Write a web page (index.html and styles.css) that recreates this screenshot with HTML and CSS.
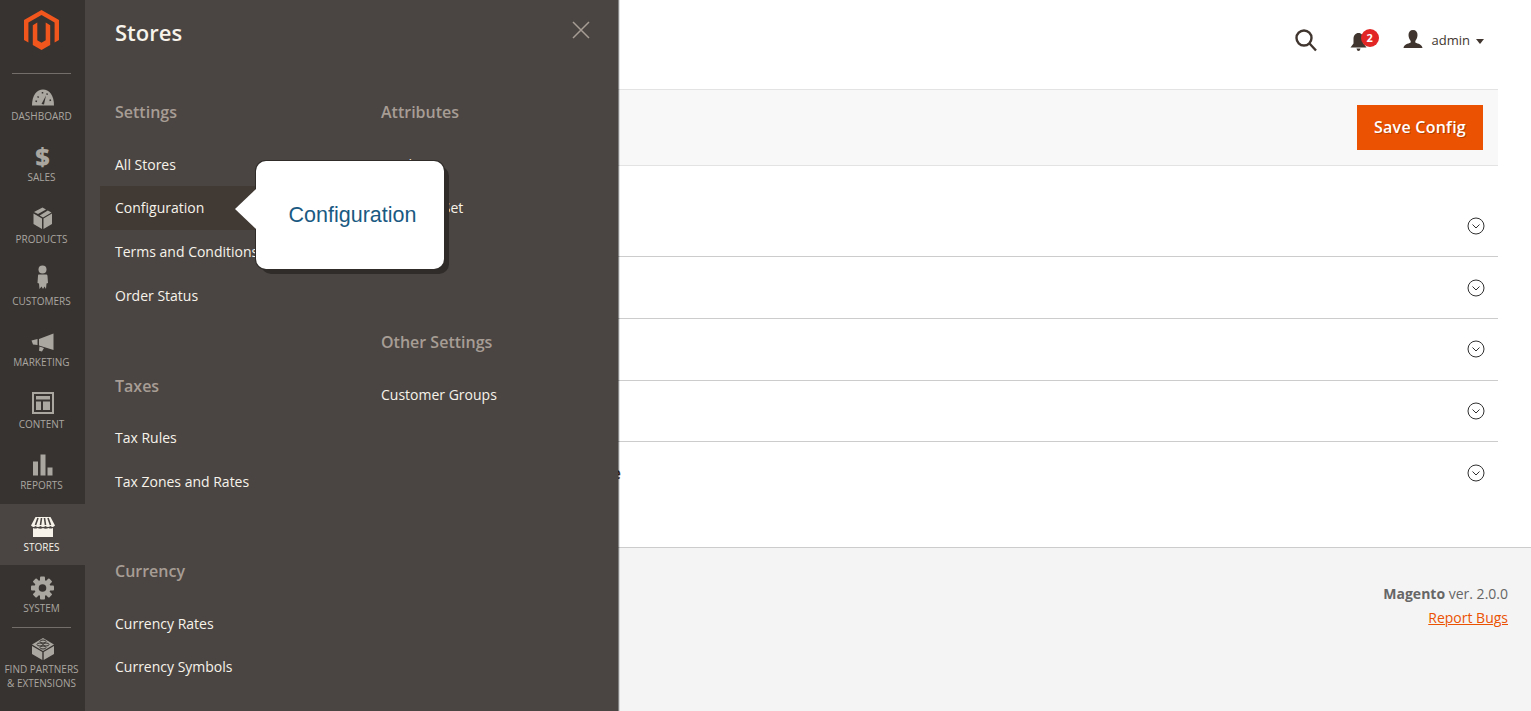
FILE: index.html
```html
<!DOCTYPE html>
<html lang="en">
<head>
<meta charset="utf-8">
<title>Configuration</title>
<link rel="stylesheet" href="styles.css">
</head>
<body>
<div class="app">
  <nav class="sidebar">
    <div class="logo">
      <svg class="logo-mark" width="35" height="40" viewBox="0 0 35 40"><path class="logo-fill" d="M17.5 0 35 10V30L30.6 32.6V12.6L17.5 5 4.4 12.6V32.6L0 30V10Z"/><path class="logo-fill" d="M8.8 15.2 13.3 12.6V30.3L17.5 32.8 21.7 30.3V12.6L26.2 15.2V35L17.5 40 8.8 35Z"/></svg>
    </div>
    <a class="nav-item">
      <svg class="nav-icon" viewBox="0 0 24 24"><path d="M1 21.5C1 11 6 5.5 12 5.5S23 11 23 21.5Z"/><path class="cut" d="M10.5 20 15 11.5 13 20.5Z"/><path class="cut-line" d="M4.5 17l1.500.5M6.500 12.500l1.200 1M11.500 8v1.500M16.500 9.500l-.8 1.200M20 16l-1.500.5"/></svg>
      <span class="nav-label">Dashboard</span>
    </a>
    <a class="nav-item">
      <span class="nav-icon dollar">$</span>
      <span class="nav-label">Sales</span>
    </a>
    <a class="nav-item">
      <svg class="nav-icon" viewBox="0 0 24 24"><path d="M11.500.5 15 2.500 7 7 3 5ZM16.800 3.500 20.500 5.500 12 10.500 8.700 8.500Z"/><path d="M2.500 6.500 11 11.500V22L2.500 17ZM12.500 11.500 21 6.500V17L12.500 22Z"/></svg>
      <span class="nav-label">Products</span>
    </a>
    <a class="nav-item">
      <svg class="nav-icon" viewBox="0 0 24 24"><circle cx="11.500" cy="1.500" r="4"/><path d="M7.500 6.500H15.500Q16.500 6.500 16.500 8L17 15 15.500 15.500 15 21 13.500 18.500 12 21 10.500 18.500 8.500 21 8 15.500 6.500 15 7 8Q7 6.500 7.500 6.500Z"/></svg>
      <span class="nav-label">Customers</span>
    </a>
    <a class="nav-item">
      <svg class="nav-icon" viewBox="0 0 24 24"><path d="M8 9 22.500 3.500V20L8 15.500ZM.5 10.500 6.500 9V15L2 14.500ZM8.500 16.500 13 18 11 21.500 8 20.800Z"/></svg>
      <span class="nav-label">Marketing</span>
    </a>
    <a class="nav-item">
      <svg class="nav-icon" viewBox="0 0 24 24"><path d="M1 1H23V23H1ZM3 3V21H21V3Z" fill-rule="evenodd"/><path d="M5 5H19V8.500H5ZM5 10.500H10V19H5ZM12 10.500H19V19H12Z"/></svg>
      <span class="nav-label">Content</span>
    </a>
    <a class="nav-item">
      <svg class="nav-icon" viewBox="0 0 24 24"><path d="M2 8.500H7V22.500H2ZM9.500 1.500H14.500V22.500H9.500ZM16.500 14.500H21.500V22.500H16.500Z"/></svg>
      <span class="nav-label">Reports</span>
    </a>
    <a class="nav-item nav-item-active">
      <svg class="nav-icon" viewBox="0 0 24 24"><path d="M4.500 3H19.500L24 11.500Q22 14 19.500 12 17 14 14.500 12 12 14 9.500 12 7 14 4.500 12 2 14 0 11.500Z"/><path class="stripe" d="M7 4 4.500 11M10.500 4 9.500 11M13.500 4 14.500 11M17 4 19.500 11"/><path d="M2 14Q4.500 15 6.500 14 9.500 15.500 12 14 14.500 15.500 17.500 14 19.500 15 22 14V23H2Z"/></svg>
      <span class="nav-label">Stores</span>
    </a>
    <a class="nav-item">
      <svg class="nav-icon" viewBox="0 0 24 24"><g class="gear"><circle cx="11.500" cy="13" r="8"/><rect x="9" y="1.500" width="5" height="23" rx="1"/><rect x="9" y="1.500" width="5" height="23" rx="1" transform="rotate(45 11.500 13)"/><rect x="9" y="1.500" width="5" height="23" rx="1" transform="rotate(90 11.500 13)"/><rect x="9" y="1.500" width="5" height="23" rx="1" transform="rotate(135 11.500 13)"/></g><circle class="cut" cx="11.500" cy="13" r="3.800"/></svg>
      <span class="nav-label">System</span>
    </a>
    <a class="nav-item nav-item-last">
      <svg class="nav-icon" viewBox="0 0 24 24"><path d="M12 1 23 7.500 12 14 1 7.500Z"/><path d="M1 9 11.300 15V23L1 17ZM12.700 15 23 9V17L12.700 23Z"/><path class="stud" d="M6 7.500a3 1.500 0 1 0 6 0a3 1.500 0 1 0-6 0M12 7.500a3 1.500 0 1 0 6 0a3 1.500 0 1 0-6 0M9 4.500a3 1.500 0 1 0 6 0a3 1.500 0 1 0-6 0M9 10.500a3 1.500 0 1 0 6 0a3 1.500 0 1 0-6 0"/></svg>
      <span class="nav-label">Find Partners<br>&amp; Extensions</span>
    </a>
  </nav>

  <div class="main">
    <div class="content">
      <header class="topbar">
        <svg class="search-icon" width="24" height="24" viewBox="0 0 24 24"><circle cx="10" cy="10" r="7.500"/><path d="M15.500 15.500 22 22.500"/></svg>
        <div class="bell">
          <svg width="17" height="18" viewBox="0 0 17 18"><path class="dark-fill" d="M8.500 0C11.500 0 13.500 2.500 13.500 6V10.500L16.500 14.500H.5L3.500 10.500V6C3.500 2.500 5.500 0 8.500 0ZM6.500 15.500H10.500Q10 18 8.500 18T6.500 15.500Z"/></svg>
          <span class="badge">2</span>
        </div>
        <div class="user">
          <svg width="20" height="18" viewBox="0 0 20 18"><path class="dark-fill" d="M10 0C13 0 14.500 2 14.500 5S13 10 12.300 11V12.500C15 14 19 14 19.500 18H.5C1 14 5 14 7.700 12.500V11C7 10 5.500 8 5.500 5S7 0 10 0Z"/></svg>
          <span class="user-name">admin</span>
          <span class="caret"></span>
        </div>
      </header>
      <div class="actions">
        <button class="save-btn">Save Config</button>
      </div>
      <div class="rows">
        <div class="row"><span class="chevron"><svg width="18" height="18" viewBox="0 0 18 18"><circle cx="9" cy="9" r="8"/><path d="M5.500 7.500 9 11 12.500 7.500"/></svg></span></div>
        <div class="row"><span class="chevron"><svg width="18" height="18" viewBox="0 0 18 18"><circle cx="9" cy="9" r="8"/><path d="M5.500 7.500 9 11 12.500 7.500"/></svg></span></div>
        <div class="row"><span class="chevron"><svg width="18" height="18" viewBox="0 0 18 18"><circle cx="9" cy="9" r="8"/><path d="M5.500 7.500 9 11 12.500 7.500"/></svg></span></div>
        <div class="row"><span class="chevron"><svg width="18" height="18" viewBox="0 0 18 18"><circle cx="9" cy="9" r="8"/><path d="M5.500 7.500 9 11 12.500 7.500"/></svg></span></div>
        <div class="row row-last"><span class="row-title">Default Store Page Value</span><span class="chevron"><svg width="18" height="18" viewBox="0 0 18 18"><circle cx="9" cy="9" r="8"/><path d="M5.500 7.500 9 11 12.500 7.500"/></svg></span></div>
      </div>
    </div>
    <footer class="footer">
      <p class="version"><strong>Magento</strong> ver. 2.0.0</p>
      <a class="report">Report Bugs</a>
    </footer>
  </div>

  <aside class="panel">
    <div class="panel-head">
      <h2 class="panel-title">Stores</h2>
      <svg class="close" width="18" height="18" viewBox="0 0 18 18"><path d="M1 1 17 17M17 1 1 17"/></svg>
    </div>
    <div class="panel-cols">
      <div class="panel-col">
        <section class="group">
          <h3 class="group-title">Settings</h3>
          <a class="link">All Stores</a>
          <a class="link link-active">Configuration</a>
          <a class="link">Terms and Conditions</a>
          <a class="link">Order Status</a>
        </section>
        <section class="group group-tight">
          <h3 class="group-title">Taxes</h3>
          <a class="link">Tax Rules</a>
          <a class="link">Tax Zones and Rates</a>
        </section>
        <section class="group">
          <h3 class="group-title">Currency</h3>
          <a class="link">Currency Rates</a>
          <a class="link">Currency Symbols</a>
        </section>
      </div>
      <div class="panel-col">
        <section class="group">
          <h3 class="group-title">Attributes</h3>
          <a class="link">Product</a>
          <a class="link">Attribute Set</a>
          <a class="link">Rating</a>
        </section>
        <section class="group">
          <h3 class="group-title">Other Settings</h3>
          <a class="link">Customer Groups</a>
        </section>
      </div>
    </div>
    <div class="tooltip">Configuration</div>
  </aside>
</div>
</body>
</html>
```

FILE: styles.css
```css
* { box-sizing: border-box; }
html, body { margin: 0; height: 100%; overflow: hidden; }
body { font-family: "Open Sans", sans-serif; color: #41362f; background: #fff; }
.app { display: flex; height: 711px; position: relative; }

/* sidebar */
.sidebar { width: 85px; flex: none; background: #373330; display: flex; flex-direction: column; }
.logo { height: 73.5px; margin: 0 14px 0 12px; border-bottom: 1px solid #736e6a; padding: 10px 0 0 12px; }
.logo-mark { display: block; }
.logo-fill { fill: #f1561d; }
.nav-item { height: 61.5px; padding: 10px 2px 0 0; display: flex; flex-direction: column; align-items: center; color: #aaa6a0; }
.nav-item-active { height: 61.2px; margin-bottom: .3px; background: #4a4542; color: #f7f3eb; }
.nav-item-last { position: relative; }
.nav-icon { width: 24px; height: 24px; margin-left: 2px; display: block; overflow: visible; fill: currentColor; flex: none; }
.nav-label { display: block; margin-top: 1.5px; font-size: 10px; line-height: 14px; text-transform: uppercase; text-align: center; white-space: nowrap; }
.dollar { height: 23.5px; font-size: 25px; line-height: 22px; font-weight: 800; text-align: center; }
.cut { fill: #373330; }
.cut-line { fill: none; stroke: #373330; stroke-width: 1.5; }
.stripe { fill: none; stroke: #4a4542; stroke-width: 1.600; }
.stud { fill: none; stroke: #373330; stroke-width: 1; }
.nav-item-last::before { content: ""; position: absolute; left: 12px; right: 14px; top: 0; border-top: 1px solid #736e6a; }

/* main */
.main { flex: 1; min-width: 0; display: flex; flex-direction: column; }
.content { flex: 1; padding-right: 33px; }
.topbar { height: 90px; border-bottom: 1px solid #e3e3e3; display: flex; align-items: center; justify-content: flex-end; padding: 0 14px 9px 0; }
.search-icon { fill: none; stroke: #41362f; stroke-width: 2.400; margin-right: 32px; margin-left: 1px; }
.bell { position: relative; height: 18px; width: 17px; margin-right: 36px; margin-top: 3px; }
.bell svg { display: block; }
.dark-fill { fill: #41362f; }
.badge { position: absolute; left: 11px; top: -4px; width: 18px; height: 18px; border-radius: 50%; background: #e22626; color: #fff; font-size: 11px; font-weight: 700; line-height: 17px; text-align: center; }
.user { display: flex; align-items: center; }
.user svg { display: block; margin-right: 9px; margin-top: -3px; }
.user-name { font-size: 13px; line-height: 18px; color: #41362f; }
.caret { margin-left: 6px; margin-top: 2px; border-top: 5px solid #41362f; border-left: 4px solid transparent; border-right: 4px solid transparent; }
.actions { height: 76px; background: #f8f8f8; border-bottom: 1px solid #e3e3e3; display: flex; align-items: center; justify-content: flex-end; padding-right: 15px; }
.save-btn { width: 126px; height: 45px; border: 0; background: #eb5202; color: #fff; font-family: "Open Sans", sans-serif; font-size: 16px; font-weight: 600; letter-spacing: .25px; text-shadow: 1px 1px 0 rgba(0,0,0,.25); padding: 0 0 2px; }
.rows { margin-top: 29.800px; }
.row { height: 61.670px; border-bottom: 1px solid #ccc; display: flex; align-items: center; justify-content: flex-end; padding: .1px 13px 0 0; }
.row-last { border-bottom: 0; justify-content: space-between; }
.row-title { width: 536px; font-size: 16px; font-weight: 600; white-space: nowrap; text-align: right; color: #41362f; }
.chevron { display: block; width: 18px; height: 18px; }
.chevron svg { display: block; fill: none; stroke: #303030; stroke-width: 1; }
.footer { height: 164px; flex: none; background: #f4f4f4; border-top: 1px solid #ccc; padding: 36px 23px 0 0; text-align: right; font-size: 14px; line-height: 20px; color: #666; }
.version { margin: 0 0 4px; }
.report { color: #eb5202; text-decoration: underline; }

/* slide-out panel */
.panel { position: absolute; left: 85px; top: 0; bottom: 0; width: 533px; background: #4a4542; box-shadow: 1px 0 0 rgba(0,0,0,.4), 2px 0 0 rgba(0,0,0,.12); padding: 0 0 0 15px; color: #f7f3eb; }
.panel-head { height: 100px; display: flex; justify-content: space-between; padding: 16px 28px 0 15px; }
.panel-title { margin: 0; font-size: 22px; line-height: 32px; font-weight: 600; color: #f7f3eb; }
.close { fill: none; stroke: #a79d95; stroke-width: 1.500; margin-top: 5px; }
.panel-cols { display: flex; }
.panel-col { width: 266px; flex: none; }
.group { margin-bottom: 56.100px; }
.group-tight { margin-bottom: 55.300px; }
.group-title { margin: 0 0 18.800px; padding-left: 15px; font-size: 16px; line-height: 24px; font-weight: 600; color: #a79d95; }
.link { display: block; height: 43.670px; line-height: 44.300px; padding-left: 15px; font-size: 14px; color: #f7f3eb; white-space: nowrap; }
.link-active { background: #403934; }
.tooltip { position: absolute; left: 171px; top: 161px; width: 188px; height: 108px; padding-left: 5px; background: #fff; border-radius: 10px; box-shadow: 0 0 0 1px #2f2c2a, 5px 5px 0 #2f2c2a; font-family: "Liberation Sans", Arial, sans-serif; font-size: 21.500px; line-height: 108px; text-align: center; color: #1a5a82; }
.tooltip::before { content: ""; position: absolute; left: -21px; top: 28px; border-right: 21px solid #fff; border-top: 20px solid transparent; border-bottom: 20px solid transparent; }
```
